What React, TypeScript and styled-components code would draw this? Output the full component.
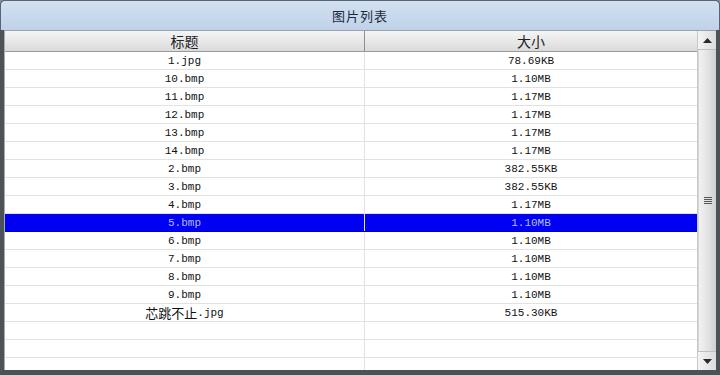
import React, { FC } from 'react'
import styled, { createGlobalStyle } from 'styled-components'

type Item = { name: string; size: string }

const items: Item[] = [
	{ name: '1.jpg', size: '78.69KB' },
	{ name: '10.bmp', size: '1.10MB' },
	{ name: '11.bmp', size: '1.17MB' },
	{ name: '12.bmp', size: '1.17MB' },
	{ name: '13.bmp', size: '1.17MB' },
	{ name: '14.bmp', size: '1.17MB' },
	{ name: '2.bmp', size: '382.55KB' },
	{ name: '3.bmp', size: '382.55KB' },
	{ name: '4.bmp', size: '1.17MB' },
	{ name: '5.bmp', size: '1.10MB' },
	{ name: '6.bmp', size: '1.10MB' },
	{ name: '7.bmp', size: '1.10MB' },
	{ name: '8.bmp', size: '1.10MB' },
	{ name: '9.bmp', size: '1.10MB' },
	{ name: '芯跳不止.jpg', size: '515.30KB' },
]

const SELECTED = 9
const EMPTY_ROWS = 3

// split a label into han / latin runs so the han glyphs can be drawn a bit bigger
const runs = (text: string) => text.match(/[\u4e00-\u9fff]+|[^\u4e00-\u9fff]+/g) || []
const isHan = (s: string) => /[\u4e00-\u9fff]/.test(s)

const Label: FC<{ text: string }> = ({ text }) => (
	<>
		{runs(text).map((part, i) => (isHan(part) ? <Han key={i}>{part}</Han> : <span key={i}>{part}</span>))}
	</>
)

const GlobalStyle = createGlobalStyle`
	html, body {
		margin: 0;
		padding: 0;
		background: #8a8f96;
	}
	body {
		font-family: 'Liberation Mono', 'Noto Sans CJK SC', monospace;
	}
`

const App: FC = () => (
	<>
		<GlobalStyle />
		<Window>
			<TitleBar>图片列表</TitleBar>
			<Body>
				<List>
					<HeaderRow>
						<HeaderCell $first>标题</HeaderCell>
						<HeaderCell>大小</HeaderCell>
					</HeaderRow>
					{items.map((item, i) => (
						<Row key={item.name} $selected={i === SELECTED}>
							<Cell $first>
								<Label text={item.name} />
							</Cell>
							<Cell>{item.size}</Cell>
						</Row>
					))}
					{Array.from({ length: EMPTY_ROWS }).map((_, i) => (
						<Row key={'e' + i}>
							<Cell $first />
							<Cell />
						</Row>
					))}
				</List>
				<ScrollBar>
					<ArrowButton>
						<svg width="9" height="5" viewBox="0 0 9 5">
							<path d="M0 5 L4.5 0 L9 5 Z" fill="#2a2a2a" />
						</svg>
					</ArrowButton>
					<Thumb>
						<Grip>
							<span />
							<span />
							<span />
							<span />
						</Grip>
					</Thumb>
					<ArrowButton>
						<svg width="9" height="5" viewBox="0 0 9 5">
							<path d="M0 0 L9 0 L4.5 5 Z" fill="#2a2a2a" />
						</svg>
					</ArrowButton>
				</ScrollBar>
			</Body>
		</Window>
	</>
)

const Window = styled.div`
	width: 720px;
	height: 375px;
	box-sizing: border-box;
	display: flex;
	flex-direction: column;
	background: #4d5257;
	border-radius: 5px 5px 0 0;
	overflow: hidden;
	padding: 0 4px 0 4px;
`

const TitleBar = styled.div`
	height: 30px;
	margin: 0 -4px;
	flex: none;
	display: flex;
	align-items: center;
	justify-content: center;
	background: linear-gradient(#d2e1f1, #bfd2e8);
	border-top: 1px solid #5a6470;
	border-left: 1px solid #5a6470;
	border-right: 1px solid #5a6470;
	border-radius: 5px 5px 0 0;
	box-sizing: border-box;
	font-family: 'Noto Sans CJK SC', sans-serif;
	font-size: 13px;
	color: #1c2a3c;
	letter-spacing: 1px;
`

const Body = styled.div`
	display: flex;
	height: 339px;
	border-left: 1px solid #a8acb0;
	border-top: 1px solid #9aa4ae;
	background: #fff;
`

const List = styled.div`
	flex: 1;
	display: flex;
	flex-direction: column;
	overflow: hidden;
`

const HeaderRow = styled.div`
	display: flex;
	height: 21px;
	flex: none;
	background: linear-gradient(#f4f4f4, #e6e6e6 60%, #dadada);
	border-bottom: 1px solid #9a9a9a;
	box-sizing: border-box;
`

const HeaderCell = styled.div<{ $first?: boolean }>`
	${({ $first }) => ($first ? 'width: 359px; border-right: 1px solid #8e8e8e;' : 'flex: 1;')}
	display: flex;
	align-items: center;
	justify-content: center;
	font-family: 'Noto Sans CJK SC', sans-serif;
	font-size: 14px;
	color: #222;
`

const Row = styled.div<{ $selected?: boolean }>`
	display: flex;
	height: 18px;
	flex: none;
	box-sizing: border-box;
	border-bottom: 1px solid ${({ $selected }) => ($selected ? '#0000c8' : '#e2e2e2')};
	background: ${({ $selected }) => ($selected ? '#0000f2' : '#fff')};
	color: ${({ $selected }) => ($selected ? '#b4bcff' : '#111')};
`

const Cell = styled.div<{ $first?: boolean }>`
	${({ $first }) => ($first ? 'width: 359px; border-right: 1px solid #e2e2e2;' : 'flex: 1;')}
	display: flex;
	align-items: center;
	justify-content: center;
	font-family: 'Liberation Mono', 'Noto Sans CJK SC', monospace;
	font-size: 11px;
	white-space: pre;
`

const Han = styled.span`
	font-family: 'Noto Sans CJK SC', sans-serif;
	font-size: 13px;
	line-height: 1;
`

const ScrollBar = styled.div`
	width: 18px;
	flex: none;
	display: flex;
	flex-direction: column;
	background: #e8e8e8;
	border-left: 1px solid #c8c8c8;
`

const ArrowButton = styled.div`
	height: 18px;
	flex: none;
	display: flex;
	align-items: center;
	justify-content: center;
	background: linear-gradient(90deg, #f4f4f4, #dcdcdc);
	border-bottom: 1px solid #c0c0c0;
	&:last-child {
		border-bottom: none;
		border-top: 1px solid #c0c0c0;
	}
`

const Thumb = styled.div`
	flex: 1;
	display: flex;
	align-items: center;
	justify-content: center;
	background: linear-gradient(90deg, #f2f2f2, #e0e0e0 60%, #cfcfcf);
	border-left: 1px solid #d6d6d6;
`

const Grip = styled.div`
	display: flex;
	flex-direction: column;
	gap: 1px;
	span {
		display: block;
		width: 8px;
		height: 1px;
		background: #555;
	}
`

export default App
